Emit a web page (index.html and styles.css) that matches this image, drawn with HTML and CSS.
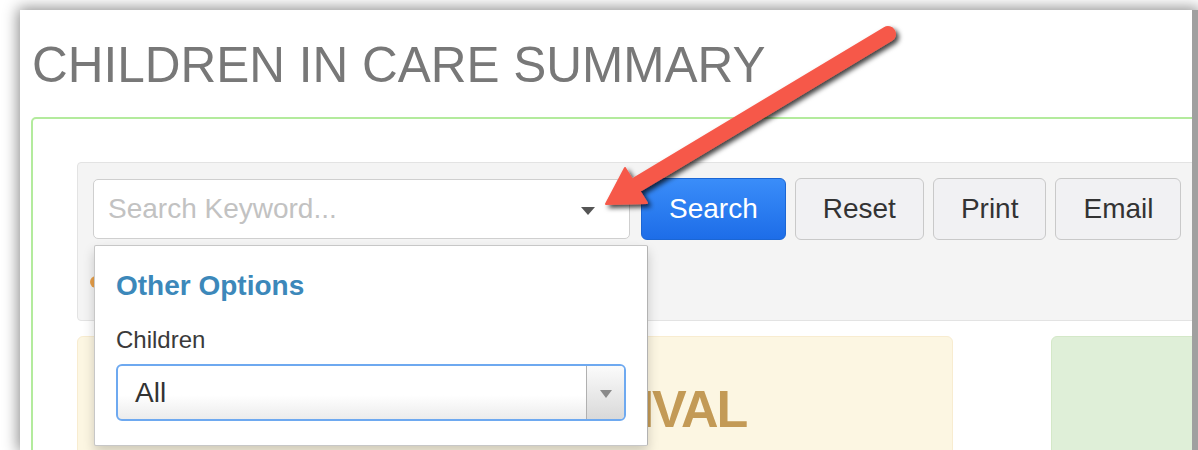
FILE: index.html
```html
<!DOCTYPE html>
<html lang="en">
<head>
<meta charset="utf-8">
<title>Children in Care Summary</title>
<link rel="stylesheet" href="styles.css">
</head>
<body>
<div class="page">
  <h1 class="title">CHILDREN IN CARE SUMMARY</h1>

  <div class="panel">
    <div class="well">
      <div class="toolbar">
        <div class="search-box">
          <span class="placeholder">Search Keyword...</span>
          <span class="caret"></span>

          <div class="options-menu">
            <div class="options-title">Other Options</div>
            <label class="options-label">Children</label>
            <div class="select">
              <span class="select-value">All</span>
              <span class="select-arrow"><span class="select-tri"></span></span>
            </div>
          </div>
        </div>
        <button class="btn btn-primary">Search</button>
        <button class="btn">Reset</button>
        <button class="btn">Print</button>
        <button class="btn">Email</button>
      </div>
      <div class="more-row">
        <span class="more-icon"></span>
      </div>
    </div>

    <div class="cards">
      <div class="card card-warning">
        <div class="card-heading">ARRIVAL</div>
      </div>
      <div class="card card-success"></div>
    </div>
  </div>

  <svg class="pointer" width="1172" height="440" viewBox="0 0 1172 440">
    <defs>
      <filter id="arrow-shadow" x="-20%" y="-20%" width="140%" height="140%">
        <feDropShadow dx="3" dy="3" stdDeviation="2.5" flood-color="#000" flood-opacity="0.75"/>
      </filter>
    </defs>
    <g filter="url(#arrow-shadow)" fill="#f6594a" stroke="#f6594a">
      <line x1="868" y1="24" x2="618" y2="174" stroke-width="16" stroke-linecap="round"/>
      <polygon points="586,194 605,158 627,193" stroke-width="2" stroke-linejoin="round"/>
    </g>
  </svg>
</div>
</body>
</html>
```

FILE: styles.css
```css
* {
  box-sizing: border-box;
}

html, body {
  margin: 0;
  padding: 0;
  background: #fff;
  overflow: hidden;
}

body {
  width: 1198px;
  height: 450px;
  font-family: "Liberation Sans", Arial, Helvetica, sans-serif;
  color: #333;
}

.page {
  position: relative;
  margin: 10px 0 0 20px;
  width: 1178px;
  height: 440px;
  background: #fff;
  border-right: 6px solid #a0a0a0;
  overflow: hidden;
  box-shadow: 0 0 14px 2px rgba(0, 0, 0, 0.45);
}

.title {
  margin: 28px 0 0 12px;
  font-size: 49.5px;
  line-height: 54px;
  font-weight: 400;
  color: #787878;
  white-space: nowrap;
}

.panel {
  margin: 25px 0 0 11px;
  width: 1300px;
  height: 400px;
  border: 2px solid #b3eb9d;
  border-radius: 5px;
  padding: 43px 0 0 44px;
}

.well {
  width: 1200px;
  height: 159px;
  background: #f4f4f4;
  border: 1px solid #e3e3e3;
  border-radius: 4px;
  padding: 15px 0 0 15px;
}

.toolbar {
  display: flex;
  align-items: center;
  gap: 9px;
  height: 62px;
}

.search-box {
  position: relative;
  flex-shrink: 0;
  width: 537px;
  height: 60px;
  margin-right: 2px;
  background: #fff;
  border: 1px solid #cfcfcf;
  border-radius: 5px;
  display: flex;
  align-items: center;
  justify-content: space-between;
  padding: 0 34px 0 14px;
}

.placeholder {
  font-size: 28px;
  color: #c2c2c2;
}

.caret {
  width: 0;
  height: 0;
  margin-top: 4px;
  border-left: 7.5px solid transparent;
  border-right: 7.5px solid transparent;
  border-top: 8px solid #555;
}

.btn {
  flex-shrink: 0;
  height: 62px;
  padding: 0 27px;
  font-family: inherit;
  font-size: 28px;
  color: #333;
  background: #f1f1f3;
  border: 1px solid #c9c9c9;
  border-radius: 6px;
}

.btn-primary {
  color: #fff;
  background: linear-gradient(#3a8df9, #1d6de8);
  border-color: #1b66d4;
}

.more-row {
  margin-top: 36px;
  height: 14px;
}

.more-icon {
  display: block;
  width: 12px;
  height: 12px;
  margin-left: -3px;
  border-radius: 50%;
  background: #e8a04a;
}

.options-menu {
  position: absolute;
  top: 65px;
  left: 0;
  width: 554px;
  height: 201px;
  background: #fff;
  border: 1px solid rgba(0, 0, 0, 0.22);
  border-right-color: rgba(0, 0, 0, 0.3);
  border-radius: 2px;
  box-shadow: 0 6px 12px rgba(0, 0, 0, 0.18);
  padding: 23px 21px 0 21px;
  z-index: 2;
}

.options-title {
  font-size: 28px;
  line-height: 34px;
  font-weight: 700;
  color: #3c88ba;
}

.options-label {
  display: block;
  margin-top: 20px;
  font-size: 24px;
  line-height: 34px;
  color: #3a3a3a;
}

.select {
  margin-top: 7px;
  height: 57px;
  display: flex;
  align-items: stretch;
  background: linear-gradient(#fff 55%, #ececec);
  border: 2px solid #6ea9f0;
  border-radius: 6px;
  overflow: hidden;
}

.select-value {
  flex: 1;
  display: flex;
  align-items: center;
  padding-left: 17px;
  font-size: 28px;
  color: #333;
}

.select-arrow {
  width: 38px;
  display: flex;
  align-items: center;
  justify-content: center;
  border-left: 1px solid #b0b0b0;
  background: linear-gradient(#fbfbfb, #d9d9d9);
}

.select-tri {
  width: 0;
  height: 0;
  margin-top: 2px;
  border-left: 6px solid transparent;
  border-right: 6px solid transparent;
  border-top: 8px solid #8a8a8a;
}

.cards {
  display: flex;
  gap: 98px;
  margin-top: 15px;
}

.card {
  flex-shrink: 0;
  height: 200px;
  border-radius: 6px;
}

.card-warning {
  width: 876px;
  background: #fcf6e2;
  border: 1px solid #f8ecd0;
  padding: 44px 0 0 455px;
}

.card-success {
  width: 300px;
  background: #dfefd8;
  border: 1px solid #d4e8c8;
}

.card-heading {
  font-size: 52px;
  line-height: 57px;
  font-weight: 700;
  letter-spacing: -2px;
  color: #c39a56;
  white-space: nowrap;
}

.pointer {
  position: absolute;
  top: 0;
  left: 0;
  z-index: 5;
  pointer-events: none;
}
```
